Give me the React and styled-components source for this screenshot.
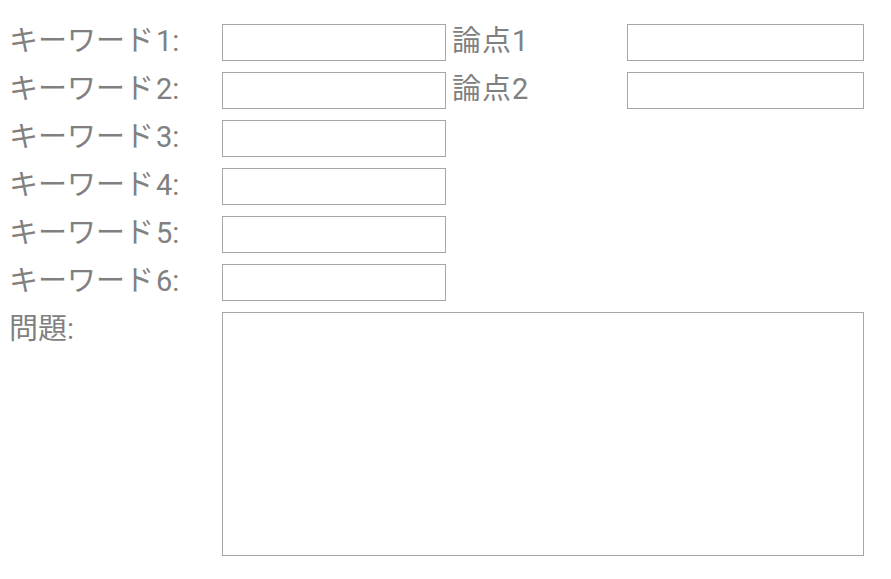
import React from "react";
import styled, { createGlobalStyle } from "styled-components";

const GlobalStyle = createGlobalStyle`
  body {
    margin: 0;
    background: #ffffff;
    font-family: Roboto, "Noto Sans CJK JP", "Noto Sans", sans-serif;
  }
`;

const Form = styled.form`
  display: grid;
  grid-template-columns: 213px 224px 181px 237px;
  align-items: start;
  row-gap: 11px;
  padding: 24px 0 0 9px;
`;

const Label = styled.label`
  display: block;
  grid-column: ${(p) => (p.$side ? 3 : 1)};
  height: 37px;
  line-height: 35px;
  font-size: 29px;
  font-weight: 400;
  color: #808080;
  white-space: nowrap;
  padding-left: ${(p) => (p.$side ? "6px" : "0")};
  letter-spacing: ${(p) => (p.$side ? "1px" : "0")};
`;

const Num = styled.span`
  margin-left: 2px;
`;

const Input = styled.input`
  box-sizing: border-box;
  width: 100%;
  height: 37px;
  margin: 0;
  border: 1px solid #a6a6a6;
  background: #fff;
  outline: none;
`;

const TextArea = styled.textarea`
  box-sizing: border-box;
  grid-column: 2 / 5;
  width: 642px;
  height: 244px;
  margin: 0;
  border: 1px solid #a6a6a6;
  resize: none;
  outline: none;
`;

export default function App() {
  const rows = [1, 2, 3, 4, 5, 6];
  return (
    <>
      <GlobalStyle />
      <Form>
        {rows.map((n) => (
          <React.Fragment key={n}>
            <Label>
              キーワード<Num>{n}:</Num>
            </Label>
            <Input type="text" />
            {n <= 2 && (
              <>
                <Label $side>論点{n}</Label>
                <Input type="text" />
              </>
            )}
          </React.Fragment>
        ))}
        <Label>問題:</Label>
        <TextArea />
      </Form>
    </>
  );
}
